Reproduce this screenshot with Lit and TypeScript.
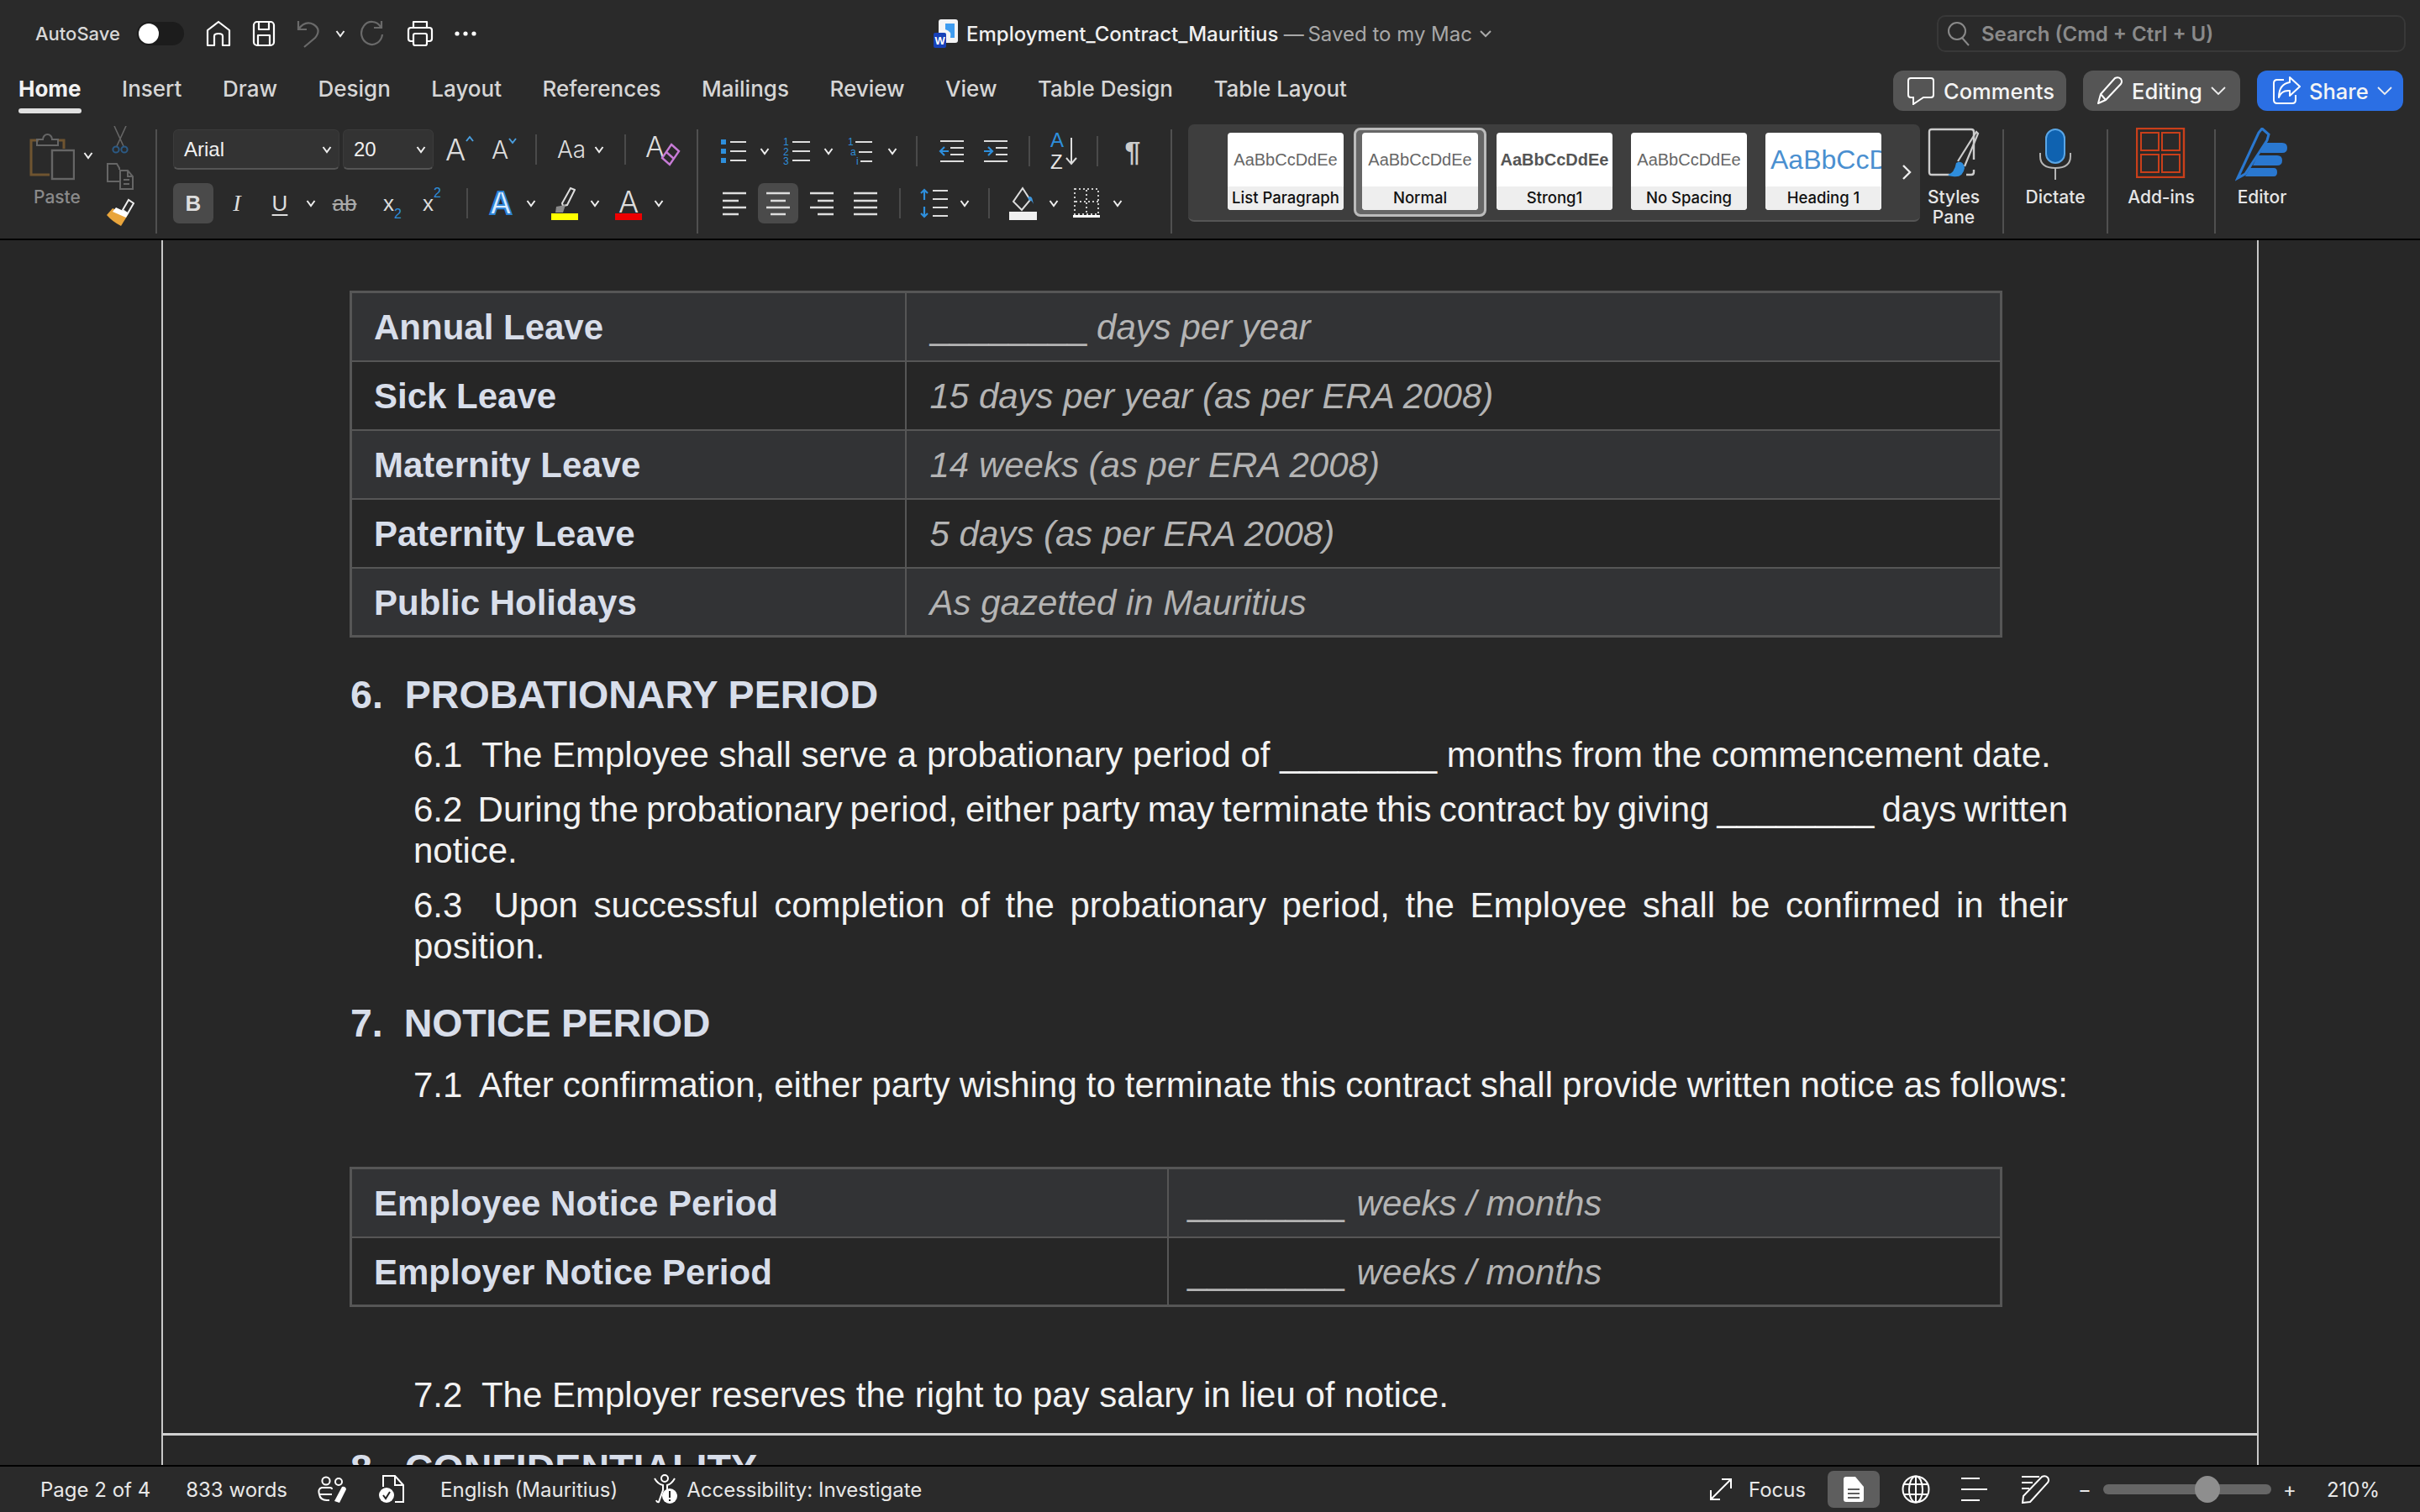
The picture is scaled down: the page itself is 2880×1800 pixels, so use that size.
import { LitElement, html, css } from 'lit';
import { customElement } from 'lit/decorators.js';

const chev = html`<svg class="chev" width="12" height="10" viewBox="0 0 12 10"><path d="M1.5 2 L6 8 L10.5 2" fill="none" stroke="#eee" stroke-width="2"/></svg>`;
const chevWide = html`<svg width="18" height="12" viewBox="0 0 18 12"><path d="M1 2 L9 10 L17 2" fill="none" stroke="#eee" stroke-width="1.8"/></svg>`;

const UI_HOME = html`<svg width="30" height="32" viewBox="0 0 30 32" fill="none" stroke="#fff" stroke-width="2.2" stroke-linejoin="round"><path d="M2 30 V12 L15 2 L28 12 V30 H20 V19 Q20 16 15 16 Q10 16 10 19 V30 Z"/></svg>`;
const UI_SAVE = html`<svg width="28" height="32" viewBox="0 0 28 32" fill="none" stroke="#fff" stroke-width="2.2" stroke-linejoin="round"><rect x="2" y="2" width="24" height="28" rx="4"/><path d="M8 2 V11 H20 V2 M7 30 V18 H21 V30"/></svg>`;
const UI_UNDO = html`<svg width="28" height="34" viewBox="0 0 28 34" fill="none" stroke="#6a6a6a" stroke-width="2.2"><path d="M2 2 V12 H12 M2 12 Q10 1 20 6 Q30 12 22 22 L9 33"/></svg>`;
const UI_REDO = html`<svg width="28" height="32" viewBox="0 0 28 32" fill="none" stroke="#6a6a6a" stroke-width="2.2"><path d="M24 8 A12.5 13.5 0 1 0 26 17 M25 1 V9 H16"/></svg>`;
const UI_PRINT = html`<svg width="32" height="32" viewBox="0 0 32 32" fill="none" stroke="#fff" stroke-width="2.2" stroke-linejoin="round"><path d="M8 9 V2 H24 V9 M8 25 H5 Q2 25 2 22 V12 Q2 9 5 9 H27 Q30 9 30 12 V22 Q30 25 27 25 H24"/><rect x="8" y="16" width="16" height="14" rx="2"/></svg>`;
const UI_MORE = html`<svg width="26" height="6" viewBox="0 0 26 6" fill="#fff"><circle cx="3" cy="3" r="2.6"/><circle cx="13" cy="3" r="2.6"/><circle cx="23" cy="3" r="2.6"/></svg>`;

const PASTE = html`<svg width="54" height="60" viewBox="0 0 54 60" fill="none" stroke-width="3">
  <path d="M11 12 H2 V53 H24" stroke="#6f5430"/><path d="M33 12 H41 V22" stroke="#6f5430"/>
  <path d="M9 18 V11 H16 A5.5 6 0 0 1 27 11 H34 V18 Z" stroke="#666" stroke-width="2"/>
  <rect x="27" y="24" width="26" height="34" stroke="#666" stroke-width="2.4"/></svg>`;
const CUT = html`<svg width="22" height="34" viewBox="0 0 22 34" fill="none"><path d="M4 0 L15 24 M18 0 L7 24" stroke="#666" stroke-width="1.6"/><circle cx="6" cy="28" r="3.6" stroke="#2b5a85" stroke-width="2"/><circle cx="16" cy="28" r="3.6" stroke="#2b5a85" stroke-width="2"/></svg>`;
const COPY = html`<svg width="32" height="32" viewBox="0 0 32 32" fill="none" stroke="#666" stroke-width="2"><path d="M16 22 H1 V1 H12 L15 6 V8"/><path d="M16 9 H25 L31 16 V31 H16 Z M25 9 V16 H31 M20 20 H27 M20 25 H27"/></svg>`;
const PAINTER = html`<svg width="34" height="34" viewBox="0 0 34 34" fill="none"><path d="M20 14 L27 2 L33 6 L26 18 Z" stroke="#eee" stroke-width="2"/><path d="M8 12 L26 20 L18 33 Q8 28 1 20 Z" fill="#e9a53c"/><path d="M12 11 L27 18 L24 23 L8 16 Z" fill="#fff"/></svg>`;

const CARET_UP = html`<svg class="caret" width="10" height="8" viewBox="0 0 10 8"><path d="M1 7 L5 2 L9 7" fill="none" stroke="#4a9fe0" stroke-width="2"/></svg>`;
const CARET_DOWN = html`<svg class="caret" width="10" height="8" viewBox="0 0 10 8"><path d="M1 1 L5 6 L9 1" fill="none" stroke="#4a9fe0" stroke-width="2"/></svg>`;

const BULLETS = html`<svg width="30" height="32" viewBox="0 0 30 32" fill="none"><g fill="#2e8fdc"><rect x="0" y="2" width="6" height="6"/><rect x="0" y="13" width="6" height="6"/><rect x="0" y="24" width="6" height="6"/></g><path d="M11 5 H30 M11 16 H30 M11 27 H30" stroke="#ddd" stroke-width="2.2"/></svg>`;
const NUMBERS = html`<svg width="32" height="34" viewBox="0 0 32 34" fill="none"><g fill="#2e8fdc" font-size="12" font-family="Liberation Sans"><text x="0" y="10">1</text><text x="0" y="22">2</text><text x="0" y="33">3</text></g><path d="M11 6 H32 M11 17 H32 M11 28 H32" stroke="#ddd" stroke-width="2.2"/></svg>`;
const MULTI = html`<svg width="32" height="34" viewBox="0 0 32 34" fill="none"><g fill="#2e8fdc" font-size="12" font-family="Liberation Sans"><text x="1" y="10">1</text><text x="4" y="22">a</text><text x="11" y="33">i</text></g><path d="M10 6 H30 M14 18 H30 M16 29 H30" stroke="#ddd" stroke-width="2.2"/></svg>`;
const OUTDENT = html`<svg width="30" height="30" viewBox="0 0 30 30" fill="none"><path d="M2 3 H30 M14 11 H30 M14 19 H30 M2 27 H30" stroke="#ddd" stroke-width="2.2"/><path d="M12 15 H2 M7 10 L2 15 L7 20" stroke="#2e8fdc" stroke-width="2.2"/></svg>`;
const INDENT = html`<svg width="30" height="30" viewBox="0 0 30 30" fill="none"><path d="M2 3 H30 M16 11 H30 M16 19 H30 M2 27 H30" stroke="#ddd" stroke-width="2.2"/><path d="M2 15 H12 M7 10 L12 15 L7 20" stroke="#2e8fdc" stroke-width="2.2"/></svg>`;
const SORT_ARROW = html`<svg width="14" height="34" viewBox="0 0 14 34" fill="none" stroke="#ddd" stroke-width="2"><path d="M7 1 V32 M1 25 L7 32 L13 25"/></svg>`;

const alignIcon = (d: string) => html`<svg width="28" height="30" viewBox="0 0 28 30" fill="none" stroke="#ddd" stroke-width="2.4"><path d=${d}/></svg>`;
const ALEFT = alignIcon('M0 3 H28 M0 12 H19 M0 20 H28 M0 28 H19');
const ACENTER = alignIcon('M0 3 H28 M5 12 H23 M0 20 H28 M5 28 H23');
const ARIGHT = alignIcon('M0 3 H28 M9 12 H28 M0 20 H28 M9 28 H28');
const AJUST = alignIcon('M0 3 H28 M0 12 H28 M0 20 H28 M0 28 H28');

const SPACING = html`<svg width="34" height="36" viewBox="0 0 34 36" fill="none"><path d="M5 14 V2 M1 6 L5 2 L9 6 M5 22 V34 M1 30 L5 34 L9 30" stroke="#2e8fdc" stroke-width="2.2"/><path d="M15 3 H33 M15 13 H33 M15 23 H33 M15 33 H33" stroke="#ddd" stroke-width="2.2"/></svg>`;
const FILL = html`<svg width="34" height="40" viewBox="0 0 34 40" fill="none"><path d="M16 2 L5 18 L15 28 L25 16 Z" stroke="#ddd" stroke-width="2"/><path d="M22 13 Q27 10 28 17 L29 21 Q26 15 24 17 Z" fill="#3f96dc"/><rect x="0" y="30" width="33" height="10" fill="#f0f0f0"/></svg>`;
const BORDERS = html`<svg width="32" height="38" viewBox="0 0 32 38" fill="none"><path d="M2 2 H30 V32 H2 Z M16 3 V32 M3 17 H30" stroke="#ccc" stroke-width="2" stroke-dasharray="2 3"/><rect x="0" y="33" width="32" height="3" fill="#fff"/></svg>`;

const ERASER = html`<svg class="eraser" width="24" height="28" viewBox="0 0 24 28" fill="none"><path d="M13 2 L22 10 L11 26 L2 18 Z M7 11 L16 19" stroke="#c77bd6" stroke-width="2.4"/></svg>`;
const BRUSH_PEN = html`<svg width="26" height="32" viewBox="0 0 26 32" fill="none"><path d="M10 20 L20 2 L25 4 L16 22 L11 23 Z" stroke="#ddd" stroke-width="2"/><path d="M3 24 L14 22 L11 31 H2 Z" fill="#8a8a8a"/></svg>`;

const STYLES_PANE = html`<svg width="62" height="62" viewBox="0 0 62 62" fill="none"><path d="M26 56 H5 Q2 56 2 53 V5 Q2 2 5 2 H52 Q55 2 55 5 V38 M55 50 V53 Q55 56 52 56 H46" stroke="#ccc" stroke-width="2.4"/><path d="M36 40 L58 5 L60 7 L44 46" stroke="#ccc" stroke-width="2.2"/><path d="M34 42 Q42 38 44 48 Q42 60 30 58 Q26 58 24 56 Q32 54 34 42 Z" fill="#2f8ddc"/></svg>`;
const DICTATE = html`<svg width="38" height="62" viewBox="0 0 38 62" fill="none"><rect x="8" y="2" width="22" height="40" rx="11" fill="#0f62b0" stroke="#5aa6e6" stroke-width="2"/><path d="M1 30 V34 Q1 48 19 48 Q37 48 37 34 V30 M19 48 V62" stroke="#b5b5b5" stroke-width="2"/></svg>`;
const ADDINS = html`<svg width="60" height="60" viewBox="0 0 60 60" fill="none" stroke="#c93f1a" stroke-width="2"><rect x="1" y="1" width="56" height="58" stroke-width="2.4"/><rect x="6" y="6" width="21" height="21"/><rect x="31" y="6" width="21" height="21"/><rect x="6" y="32" width="21" height="21"/><rect x="31" y="32" width="21" height="21"/></svg>`;
const EDITOR = html`<svg width="64" height="64" viewBox="0 0 64 64" fill="none"><path d="M3 60 L28 6 L32 1 L40 8 L38 15 L12 55 Z" stroke="#2a78d0" stroke-width="3"/><path d="M36 18 H56 Q62 18 62 24 Q62 30 56 30 H30 Z M27 33 H50 Q56 33 56 39 Q56 45 50 45 H21 Z M18 48 H46 Q50 48 50 53 Q50 58 46 58 H12 Z" fill="#2a78d0"/></svg>`;

const SEARCH = html`<svg width="26" height="30" viewBox="0 0 26 30" fill="none" stroke="#8a8a8a" stroke-width="2"><circle cx="11" cy="12" r="10"/><path d="M17 20 L25 29"/></svg>`;
const COMMENT = html`<svg width="34" height="34" viewBox="0 0 34 34" fill="none" stroke="#fff" stroke-width="2"><path d="M5 2 H29 Q32 2 32 5 V22 Q32 25 29 25 H20 L8 33 V25 H5 Q2 25 2 22 V5 Q2 2 5 2 Z"/></svg>`;
const PENCIL = html`<svg width="32" height="34" viewBox="0 0 32 34" fill="none" stroke="#fff" stroke-width="2" stroke-linejoin="round"><path d="M2 32 L5 21 L22 2 Q26 0 29 3 Q31 6 29 9 L11 28 Z M5 21 L11 28"/></svg>`;
const SHARE = html`<svg width="34" height="34" viewBox="0 0 34 34" fill="none" stroke="#fff" stroke-width="2" stroke-linejoin="round"><path d="M14 4 H6 Q2 4 2 8 V28 Q2 32 6 32 H24 Q28 32 28 28 V22"/><path d="M21 1 L33 12 L21 23 V17 Q11 16 8 25 Q8 9 21 7 Z"/></svg>`;
const WORD = html`<svg width="30" height="34" viewBox="0 0 30 34"><rect x="6" y="0" width="23" height="28" rx="3" fill="#f4f4f6"/><path d="M14 5 H25 V22 H20 Q22 14 14 12 Z" fill="#3f9cf0"/><rect x="0" y="16" width="15" height="18" rx="2" fill="#1741b8"/><text x="1.5" y="30" font-size="13" font-family="Liberation Sans" font-weight="700" fill="#fff">W</text></svg>`;

const PEOPLE = html`<svg width="38" height="32" viewBox="0 0 38 32" fill="none"><circle cx="11" cy="6" r="4.6" stroke="#fff" stroke-width="2"/><circle cx="26" cy="7" r="4" stroke="#fff" stroke-width="2"/><path d="M18 22 H3 Q1 15 6 14 H16 Q18 14 18 16 M3 22 Q4 29 12 29 H15" stroke="#fff" stroke-width="2"/><path d="M21 30 L30 13 Q34 12 35 16 L27 32 Z" fill="#fff"/></svg>`;
const DOCCHECK = html`<svg width="32" height="34" viewBox="0 0 32 34" fill="none"><path d="M6 14 V1 H20 L30 12 V32 H20 M20 1 V12 H30" stroke="#fff" stroke-width="2"/><circle cx="10" cy="24" r="9" fill="#fff"/><path d="M6 24 L9 28 L14 20" stroke="#222" stroke-width="2"/></svg>`;
const ACCESS = html`<svg width="30" height="36" viewBox="0 0 30 36" fill="none"><circle cx="14" cy="5" r="4" stroke="#fff" stroke-width="2"/><path d="M2 5 Q6 12 12 13 V19 L7 33 Q5 34 4 31 M26 5 Q22 12 17 13 V19" stroke="#fff" stroke-width="2"/><circle cx="20" cy="26" r="9" fill="#fff"/><rect x="19" y="20" width="2" height="8" fill="#222"/><rect x="19" y="30" width="2" height="2" fill="#222"/></svg>`;
const FOCUS = html`<svg width="26" height="26" viewBox="0 0 26 26" fill="none" stroke="#fff" stroke-width="2"><path d="M1 14 V25 H12 M14 1 H25 V12 M2 24 L24 2"/></svg>`;
const VDOC = html`<svg width="24" height="30" viewBox="0 0 24 30"><path d="M3 0 H14 L24 12 V27 Q24 30 21 30 H3 Q0 30 0 27 V3 Q0 0 3 0 Z" fill="#fff"/><path d="M5 15 H19 M5 20 H19 M5 25 H19" stroke="#5e5e5e" stroke-width="2"/></svg>`;
const GLOBE = html`<svg width="34" height="34" viewBox="0 0 34 34" fill="none" stroke="#fff" stroke-width="2"><circle cx="17" cy="17" r="15.5"/><ellipse cx="17" cy="17" rx="8" ry="15.5"/><path d="M17 2 V32 M3 11 H31 M3 23 H31"/></svg>`;
const OUTLINE = html`<svg width="32" height="30" viewBox="0 0 32 30" fill="none" stroke="#fff" stroke-width="2.2"><path d="M1 2 H23 M1 15 H32 M1 28 H23"/></svg>`;
const DRAFT = html`<svg width="34" height="34" viewBox="0 0 34 34" fill="none" stroke="#fff" stroke-width="2"><path d="M1 2 H22 M1 9 H14 M1 16 H10"/><path d="M2 33 L3 25 L25 2 Q29 0 32 3 Q34 6 32 9 L11 32 Z"/></svg>`;

const TABS = ['Insert', 'Draw', 'Design', 'Layout', 'References', 'Mailings', 'Review', 'View', 'Table Design', 'Table Layout'];
const STYLE_CARDS = [
  ['List Paragraph', ''],
  ['Normal', ''],
  ['Strong1', 'strong'],
  ['No Spacing', ''],
  ['Heading 1', 'h1'],
];
const LEAVE = [
  ['Sick Leave', '15 days per year (as per ERA 2008)'],
  ['Maternity Leave', '14 weeks (as per ERA 2008)'],
  ['Paternity Leave', '5 days (as per ERA 2008)'],
  ['Public Holidays', 'As gazetted in Mauritius'],
];

@customElement('app-root')
export class AppRoot extends LitElement {
  static styles = css`
    :host {
      display: flex;
      flex-direction: column;
      width: 2880px;
      height: 1800px;
      overflow: hidden;
      background: #272727;
      font-family: Inter, 'Liberation Sans', sans-serif;
      color: #e6e6e6;
    }
    svg { display: block; flex: none; }

    /* title bar */
    .titlebar {
      height: 80px;
      flex: none;
      background: #2a2a2a;
      display: grid;
      grid-template-columns: 1111px 1fr 575px;
      align-items: center;
    }
    .quick {
      display: flex;
      align-items: center;
      padding-left: 42px;
      font-size: 22px;
      font-weight: 500;
      color: #d8d8d8;
    }
    .toggle {
      width: 56px;
      height: 28px;
      border-radius: 14px;
      background: #1c1c1c;
      margin-left: 20px;
      margin-right: 26px;
      display: flex;
      align-items: center;
      padding-left: 2px;
      box-sizing: border-box;
    }
    .toggle i { width: 24px; height: 24px; border-radius: 50%; background: #fff; display: block; }
    .qi { margin-right: 25px; }
    .qi.tight { margin-right: 18px; }
    .qi.redo { margin-right: 27px; }
    .doc-title {
      display: flex;
      align-items: center;
      gap: 9px;
      font-size: 24px;
      font-weight: 500;
      color: #f0f0f0;
      white-space: nowrap;
    }
    .saved { color: #a8a8a8; font-weight: 400; }
    .dash { letter-spacing: -2px; }
    .searchbox {
      box-sizing: border-box;
      width: 558px;
      height: 44px;
      border: 2px solid #383838;
      border-radius: 10px;
      display: flex;
      align-items: center;
      gap: 14px;
      padding-left: 11px;
      font-size: 24px;
      font-weight: 600;
      color: #8a8a8a;
    }

    /* tabs */
    .tabs {
      height: 66px;
      flex: none;
      background: #2a2a2a;
      display: flex;
      align-items: flex-start;
      padding: 0 20px 0 22px;
    }
    .tab-list { display: flex; flex: none; gap: 48.5px; height: 50px; align-items: center; font-size: 26px; font-weight: 500; color: #d6d6d6; white-space: nowrap; }
    .tab.on { position: relative; font-weight: 700; color: #f2f2f2; }
    .tab.on::after {
      content: '';
      position: absolute;
      left: 0;
      right: 0;
      bottom: -14px;
      height: 6px;
      border-radius: 3px;
      background: #e0e0e0;
    }
    .actions { margin-left: auto; margin-top: 4px; display: flex; gap: 20px; font-size: 25.5px; font-weight: 500; color: #f4f4f4; }
    .action {
      height: 48px;
      box-sizing: border-box;
      background: #555;
      border-radius: 12px;
      display: flex;
      align-items: center;
      gap: 10px;
      padding: 0 0 0 16px;
    }
    .a-comments { width: 206px; }
    .a-editing { width: 187px; }
    .a-share { width: 174px; background: #2b6fe4; padding-left: 18px; }

    /* ribbon */
    .ribbon {
      height: 140px;
      flex: none;
      box-sizing: border-box;
      background: #2a2a2a;
      border-bottom: 2px solid #000;
      display: flex;
      align-items: stretch;
    }
    .sep { width: 2px; background: #505050; margin: 8px 0 6px; flex: none; }
    .paste-group { width: 185px; flex: none; display: flex; padding-left: 35px; box-sizing: border-box; }
    .paste { width: 91px; color: #8a8a8a; font-size: 21px; font-weight: 500; padding-top: 9px; }
    .paste-top { display: flex; align-items: center; gap: 10px; }
    .paste-label { margin: 7px 0 0 5px; }
    .clip { display: flex; flex-direction: column; gap: 10px; padding-top: 4px; align-items: center; width: 34px; }

    .col { display: flex; flex-direction: column; gap: 16px; padding-top: 8px; flex: none; box-sizing: border-box; }
    .row { display: flex; align-items: center; height: 48px; }
    .font-col { width: 642px; padding-left: 19px; }
    .select {
      box-sizing: border-box;
      height: 48px;
      background: #333;
      border: 1px solid #3b3b3b;
      border-bottom: 2px solid #555;
      border-radius: 6px;
      display: flex;
      align-items: center;
      justify-content: space-between;
      padding: 0 8px 0 12px;
      font-size: 24px;
      color: #f0f0f0;
      font-family: 'Liberation Sans', sans-serif;
    }
    .family { width: 198px; margin-right: 4px; }
    .size { width: 108px; }
    .glyph { display: flex; align-items: flex-start; color: #ddd; line-height: 1; font-weight: 300; flex: none; }
    .grow { font-size: 36px; margin-left: 14px; width: 55px; }
    .shrink { font-size: 30px; width: 52px; }
    .caret { margin-top: 1px; }
    .vsep { width: 2px; height: 36px; background: #4a4a4a; flex: none; }
    .case { font-size: 28px; margin-left: 24px; width: 44px; }
    .ml24 { margin-left: 24px; }
    .clear { display: flex; margin-left: 23px; }
    .clear .glyph { font-size: 34px; width: 22px; }
    .eraser { margin-left: -4px; margin-top: 12px; }

    /* cells of the B I U row, sized so the glyphs land on their columns */
    .cell { height: 48px; display: flex; align-items: center; justify-content: center; flex: none; font-family: 'Liberation Sans', sans-serif; font-size: 26px; color: #ddd; }
    .c-b { width: 48px; background: #4a4a4a; border-radius: 7px; font-weight: 700; }
    .c-i { width: 56px; font-style: italic; font-family: 'Liberation Serif', serif; font-size: 28px; }
    .c-u { width: 46px; text-decoration: underline; text-underline-offset: 4px; }
    .c-ch { width: 28px; }
    .c-s { width: 52px; text-decoration: line-through; color: #aaa; }
    .c-x { width: 62px; }
    .c-x2 { width: 32px; margin-right: 25px; }
    .cell sub, .cell sup { color: #2e8fdc; font-size: 16px; line-height: 1; }
    .cell sub { align-self: flex-end; margin-bottom: 3px; }
    .cell sup { align-self: flex-start; margin-top: 4px; }
    .fx { width: 32px; height: 48px; flex: none; display: flex; flex-direction: column; align-items: center; justify-content: center; line-height: 1; margin-left: 4px; }
    .fx.first { margin-left: 23px; }
    .fx .a { font-size: 36px; color: #ddd; height: 32px; font-weight: 300; }
    .fx .a.blue { color: #d8ecff; -webkit-text-stroke: 2px #2b82d6; font-weight: 700; font-size: 38px; height: 38px; font-family: 'Liberation Sans', sans-serif; }
    .fx b { display: block; width: 32px; height: 8px; flex: none; }
    .fx .y { background: #ffff00; }
    .fx .r { background: #ee0000; }
    .c-fxch { width: 40px; }

    .para-col { width: 562px; padding-left: 27px; }
    .grid-top { display: grid; grid-template-columns: 30px 44px 32px 44px 32px 44px 14px 68px 36px 46px 36px 44px 40px; align-items: center; justify-items: center; height: 48px; }
    .grid-bot { display: grid; grid-template-columns: 44px 48px 56px 48px 34px 48px 24px 34px 48px 24px 54px 20px; align-items: center; justify-items: center; height: 48px; }
    .sortaz { display: flex; align-items: center; }
    .sortaz .letters { font-family: 'Liberation Sans', sans-serif; font-size: 24px; line-height: 1.1; width: 18px; }
    .sortaz .blue { color: #2e8fdc; }
    .pilcrow { font-family: 'Liberation Sans', sans-serif; font-size: 34px; font-weight: 700; color: #ccc; }
    .alignbtn { width: 48px; height: 48px; display: flex; align-items: center; justify-content: center; }
    .alignbtn.on { background: #4a4a4a; border-radius: 7px; }
    .start { justify-self: start; justify-content: flex-start; padding-left: 2px; box-sizing: border-box; }

    .gallery {
      margin: 2px 0 0 19px;
      height: 116px;
      width: 871px;
      flex: none;
      box-sizing: border-box;
      background: #3e3e3e;
      border-bottom: 2px solid #555;
      border-radius: 7px;
      display: flex;
      align-items: center;
      padding-left: 47px;
      gap: 22px;
    }
    .card {
      width: 138px;
      height: 92px;
      flex: none;
      background: #fff;
      border-radius: 4px;
      overflow: hidden;
      display: flex;
      flex-direction: column;
      position: relative;
      top: -1px;
    }
    .preview {
      height: 64px;
      flex: none;
      display: flex;
      align-items: center;
      justify-content: center;
      font-family: 'Liberation Sans', sans-serif;
      font-size: 20px;
      color: #666;
      white-space: nowrap;
      overflow: hidden;
      padding: 0 6px;
    }
    .preview.strong { font-weight: 700; color: #555; }
    .preview.h1 { font-size: 32px; color: #4a8fd0; justify-content: flex-start; padding: 0 8px 0 6px; }
    .clabel { height: 28px; padding-bottom: 3px; box-sizing: border-box; background: #eee; color: #111; font-size: 18.5px; font-weight: 500; display: flex; align-items: center; justify-content: center; white-space: nowrap; }
    .selected { position: relative; }
    .selected::before {
      content: '';
      position: absolute;
      inset: -7px -10px;
      border: 3px solid #bbb;
      border-radius: 8px;
      background: #666;
    }
    .more { margin-left: 2px; }
    .big {
      flex: none;
      display: flex;
      flex-direction: column;
      align-items: center;
      font-size: 21px;
      font-weight: 500;
      color: #e6e6e6;
      padding-top: 6px;
      box-sizing: border-box;
      line-height: 24px;
      text-align: center;
    }
    .big .ico { height: 66px; display: flex; align-items: flex-start; justify-content: center; margin-bottom: 5px; }
    .b-pane { width: 98px; padding-right: 18px; }
    .b-dict { width: 122px; }
    .b-add { width: 126px; }
    .b-edit { width: 110px; }

    /* document */
    .doc { flex: 1; min-height: 0; overflow: hidden; background: #272727; }
    .page {
      box-sizing: border-box;
      width: 2496px;
      margin: 0 auto;
      border-left: 2px solid #c8c8c8;
      border-right: 2px solid #c8c8c8;
      padding-left: 222px;
      font-family: 'Liberation Sans', sans-serif;
    }
    .page.first { height: 1423px; padding-top: 60px; border-bottom: 3px solid #d0d0d0; }
    .page.next { height: 100px; padding-top: 12px; }
    table { border-collapse: collapse; width: 1967px; table-layout: fixed; font-size: 42px; border: 3px solid #565656; }
    td { border: 2px solid #565656; height: 82px; padding: 3px 0 0 26px; box-sizing: border-box; white-space: nowrap; }
    tr:nth-child(odd) td { background: #323335; }
    tr:nth-child(even) td { background: #262626; }
    td:first-child { font-weight: 700; color: #d8deea; }
    td:last-child { font-style: italic; color: #b4b4b4; padding-left: 28px; }
    col.leave { width: 660px; }
    col.notice { width: 972px; }
    .blank { font-style: normal; }
    .h { font-size: 46.6px; font-weight: 700; color: #d8deea; line-height: 54px; white-space: pre; margin: 41px 0 20px 1px; }
    .h.after { margin: 40px 0 21.5px 1px; letter-spacing: -0.25px; }
    .h.cut { margin: 0 0 0 1px; }
    .p { margin: 0 0 16px 76px; width: 1969px; font-size: 42px; line-height: 49px; color: #f2f2f2; white-space: pre; }
    .l { display: block; text-align: justify; text-align-last: justify; white-space: pre-wrap; }
    .squeeze { word-spacing: -4px; }
    .t2 { margin-top: 73.5px; }
    .t2 td:last-child { padding-left: 22.5px; }
    .t2 .blank { margin-right: 3px; }
    .p.last { margin-top: 80px; }

    /* status bar */
    .status {
      height: 56px;
      flex: none;
      box-sizing: border-box;
      background: #2a2a2a;
      border-top: 2px solid #000;
      display: flex;
      align-items: center;
      padding: 0 48px 0 48px;
      font-size: 24px;
      color: #e8e8e8;
      white-space: nowrap;
    }
    .st-left { display: flex; align-items: center; }
    .s1 { margin-right: 42px; }
    .s2 { margin-right: 35px; }
    .s3 { margin-right: 42px; }
    .s4 { margin-right: 10px; }
    .st-right { margin-left: auto; display: flex; align-items: center; }
    .focus { margin-left: 20px; }
    .vbtn { width: 62px; height: 44px; background: #5e5e5e; border-radius: 7px; display: flex; align-items: center; justify-content: center; margin: 0 26px 0 26px; }
    .outline { margin: 0 40px 0 36px; }
    .minus { margin-left: 34px; }
    .slider { position: relative; width: 200px; height: 12px; border-radius: 6px; background: #666; margin: 0 14px; }
    .thumb { position: absolute; left: 109px; top: -10px; width: 30px; height: 32px; border-radius: 50%; background: #8e8e8e; }
    .zoom { margin-left: 36px; }
  `;

  render() {
    return html`
      <div class="titlebar">
        <div class="quick">
          <span>AutoSave</span>
          <div class="toggle"><i></i></div>
          <div class="qi">${UI_HOME}</div>
          <div class="qi">${UI_SAVE}</div>
          <div class="qi tight">${UI_UNDO}</div>
          <div class="qi tight">${chev}</div>
          <div class="qi redo">${UI_REDO}</div>
          <div class="qi">${UI_PRINT}</div>
          ${UI_MORE}
        </div>
        <div class="doc-title">
          ${WORD}
          <span>Employment_Contract_Mauritius <span class="saved"><span class="dash">—</span> Saved to my Mac</span></span>
          <svg width="14" height="10" viewBox="0 0 14 10"><path d="M1 2 L7 8 L13 2" fill="none" stroke="#aaa" stroke-width="2"/></svg>
        </div>
        <div class="searchbox">${SEARCH}<span>Search (Cmd + Ctrl + U)</span></div>
      </div>

      <div class="tabs">
        <div class="tab-list">
          <div class="tab on">Home</div>
          ${TABS.map((t) => html`<div class="tab">${t}</div>`)}
        </div>
        <div class="actions">
          <div class="action a-comments">${COMMENT}<span>Comments</span></div>
          <div class="action a-editing">${PENCIL}<span>Editing</span>${chevWide}</div>
          <div class="action a-share">${SHARE}<span>Share</span>${chevWide}</div>
        </div>
      </div>

      <div class="ribbon">
        <div class="paste-group">
          <div class="paste">
            <div class="paste-top">${PASTE}${chev}</div>
            <div class="paste-label">Paste</div>
          </div>
          <div class="clip">${CUT}${COPY}${PAINTER}</div>
        </div>
        <div class="sep"></div>

        <div class="col font-col">
          <div class="row">
            <div class="select family"><span>Arial</span>${chev}</div>
            <div class="select size"><span>20</span>${chev}</div>
            <div class="glyph grow">A${CARET_UP}</div>
            <div class="glyph shrink">A${CARET_DOWN}</div>
            <div class="vsep"></div>
            <div class="glyph case">Aa</div>
            ${chev}
            <div class="vsep ml24"></div>
            <div class="clear"><div class="glyph">A</div>${ERASER}</div>
          </div>
          <div class="row">
            <div class="cell c-b">B</div>
            <div class="cell c-i">I</div>
            <div class="cell c-u">U</div>
            <div class="cell c-ch">${chev}</div>
            <div class="cell c-s">ab</div>
            <div class="cell c-x">x<sub>2</sub></div>
            <div class="cell c-x2">x<sup>2</sup></div>
            <div class="vsep"></div>
            <div class="fx first"><div class="a blue">A</div></div>
            <div class="cell c-fxch">${chev}</div>
            <div class="fx">${BRUSH_PEN}<b class="y"></b></div>
            <div class="cell c-fxch">${chev}</div>
            <div class="fx"><div class="a">A</div><b class="r"></b></div>
            <div class="cell c-fxch">${chev}</div>
          </div>
        </div>
        <div class="sep"></div>

        <div class="col para-col">
          <div class="grid-top">
            ${BULLETS}${chev}${NUMBERS}${chev}${MULTI}${chev}
            <div class="vsep"></div>
            ${OUTDENT}${INDENT}
            <div class="vsep"></div>
            <div class="sortaz"><div class="letters"><div class="blue">A</div><div>Z</div></div>${SORT_ARROW}</div>
            <div class="vsep"></div>
            <div class="pilcrow">¶</div>
          </div>
          <div class="grid-bot">
            <div class="alignbtn start">${ALEFT}</div>
            <div class="alignbtn on">${ACENTER}</div>
            <div class="alignbtn">${ARIGHT}</div>
            <div class="alignbtn">${AJUST}</div>
            <div class="vsep"></div>
            ${SPACING}${chev}
            <div class="vsep"></div>
            ${FILL}${chev}${BORDERS}${chev}
          </div>
        </div>
        <div class="sep"></div>

        <div class="gallery">
          ${STYLE_CARDS.map(
            ([label, cls]) => html`<div class=${label === 'Normal' ? 'selected' : ''}>
              <div class="card">
                <div class="preview ${cls}">AaBbCcDdEe</div>
                <div class="clabel">${label}</div>
              </div>
            </div>`
          )}
          <svg class="more" width="12" height="20" viewBox="0 0 12 20"><path d="M2 2 L10 10 L2 18" fill="none" stroke="#eee" stroke-width="2.4"/></svg>
        </div>

        <div class="big b-pane"><div class="ico">${STYLES_PANE}</div>Styles<br />Pane</div>
        <div class="sep"></div>
        <div class="big b-dict"><div class="ico">${DICTATE}</div>Dictate</div>
        <div class="sep"></div>
        <div class="big b-add"><div class="ico">${ADDINS}</div>Add-ins</div>
        <div class="sep"></div>
        <div class="big b-edit"><div class="ico">${EDITOR}</div>Editor</div>
      </div>

      <div class="doc">
        <div class="page first">
          <table>
            <colgroup><col class="leave" /><col /></colgroup>
            <tr><td>Annual Leave</td><td><span class="blank">________</span> days per year</td></tr>
            ${LEAVE.map(([k, v]) => html`<tr><td>${k}</td><td>${v}</td></tr>`)}
          </table>

          <div class="h">6.  PROBATIONARY PERIOD</div>
          <div class="p">6.1  The Employee shall serve a probationary period of ________ months from the commencement date.</div>
          <div class="p"><span class="l squeeze">6.2  During the probationary period, either party may terminate this contract by giving ________ days written</span>notice.</div>
          <div class="p"><span class="l">6.3  Upon successful completion of the probationary period, the Employee shall be confirmed in their</span>position.</div>

          <div class="h after">7.  NOTICE PERIOD</div>
          <div class="p"><span class="l squeeze">7.1  After confirmation, either party wishing to terminate this contract shall provide written notice as follows:</span></div>

          <table class="t2">
            <colgroup><col class="notice" /><col /></colgroup>
            <tr><td>Employee Notice Period</td><td><span class="blank">________</span> weeks / months</td></tr>
            <tr><td>Employer Notice Period</td><td><span class="blank">________</span> weeks / months</td></tr>
          </table>

          <div class="p last">7.2  The Employer reserves the right to pay salary in lieu of notice.</div>
        </div>
        <div class="page next"><div class="h cut">8.  CONFIDENTIALITY</div></div>
      </div>

      <div class="status">
        <div class="st-left">
          <span class="s1">Page 2 of 4</span>
          <span class="s2">833 words</span>
          <span class="s2">${PEOPLE}</span>
          <span class="s3">${DOCCHECK}</span>
          <span class="s3">English (Mauritius)</span>
          <span class="s4">${ACCESS}</span>
          <span>Accessibility: Investigate</span>
        </div>
        <div class="st-right">
          ${FOCUS}
          <span class="focus">Focus</span>
          <div class="vbtn">${VDOC}</div>
          ${GLOBE}
          <span class="outline">${OUTLINE}</span>
          ${DRAFT}
          <span class="minus">−</span>
          <div class="slider"><div class="thumb"></div></div>
          <span>+</span>
          <span class="zoom">210%</span>
        </div>
      </div>
    `;
  }
}
